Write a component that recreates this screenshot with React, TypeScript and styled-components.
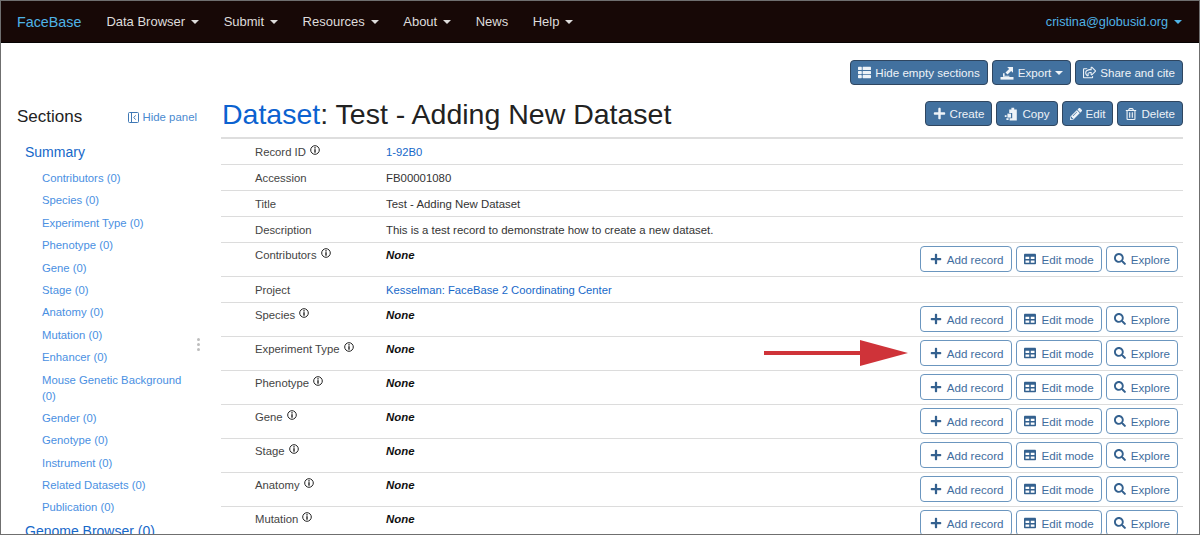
import React from 'react'
import styled, { createGlobalStyle } from 'styled-components'
import {
  FaThList,
  FaPlus,
  FaPencilAlt,
  FaRegTrashAlt,
  FaRegShareSquare,
  FaTable,
  FaSearch,
} from 'react-icons/fa'

const GlobalStyle = createGlobalStyle`
  html, body {
    margin: 0;
    padding: 0;
    background: #fff;
    overflow: hidden;
  }
  * {
    box-sizing: border-box;
  }
`

const navItems = [
  { label: 'Data Browser', caret: true },
  { label: 'Submit', caret: true },
  { label: 'Resources', caret: true },
  { label: 'About', caret: true },
  { label: 'News', caret: false },
  { label: 'Help', caret: true },
]

const sections = [
  'Contributors (0)',
  'Species (0)',
  'Experiment Type (0)',
  'Phenotype (0)',
  'Gene (0)',
  'Stage (0)',
  'Anatomy (0)',
  'Mutation (0)',
  'Enhancer (0)',
  'Mouse Genetic Background (0)',
  'Gender (0)',
  'Genotype (0)',
  'Instrument (0)',
  'Related Datasets (0)',
  'Publication (0)',
]

const InfoIcon = () => (
  <InfoSvg viewBox="0 0 10 10">
    <circle cx="5" cy="5" r="4.3" fill="none" stroke="#222" strokeWidth="1" />
    <rect x="4.3" y="4.2" width="1.4" height="3.5" fill="#222" />
    <rect x="4.3" y="2.2" width="1.4" height="1.3" fill="#222" />
  </InfoSvg>
)

const ExportIcon = () => (
  <svg width="14" height="14" viewBox="0 0 14 14" fill="currentColor">
    <rect x="0.5" y="11" width="13" height="2.6" />
    <path d="M7.2 1h5.8v5.8l-1.9-1.9-3.6 3.6-2-2 3.6-3.6z" />
    <path d="M3 7.2h1.6v2.5h4.8v1H3z" />
  </svg>
)

const CopyIcon = () => (
  <svg width="14" height="14" viewBox="0 0 14 14" fill="currentColor">
    <path d="M5.2 2.4h2.2V0.8h2.8v1.6h2.6v11H5.6v-2.2h2.6V6H5.2z" />
    <rect x="0.8" y="8.2" width="1.8" height="1.8" />
    <rect x="3.4" y="6.6" width="3.6" height="4" />
    <rect x="2.4" y="11.2" width="2.2" height="1.8" />
  </svg>
)

const PanelIcon = () => (
  <svg width="11" height="11" viewBox="0 0 11 11" fill="none" stroke="#3f78b5" strokeWidth="1">
    <rect x="0.5" y="0.5" width="10" height="10" rx="1" />
    <path d="M3.5 0.5v10" />
    <path d="M7.6 3.4 5.8 5.5l1.8 2.1" />
  </svg>
)

const ActionButtons = () => (
  <RowActions>
    <OutlineButton $wide>
      <FaPlus size={12} />
      Add record
    </OutlineButton>
    <OutlineButton>
      <FaTable size={12} />
      Edit mode
    </OutlineButton>
    <OutlineButton>
      <FaSearch size={12} />
      Explore
    </OutlineButton>
  </RowActions>
)

const App = () => {
  return (
    <Frame>
      <GlobalStyle />
      <Navbar>
        <Brand>FaceBase</Brand>
        <NavList>
          {navItems.map((item) => (
            <NavItem key={item.label}>
              {item.label}
              {item.caret && <Caret />}
            </NavItem>
          ))}
        </NavList>
        <UserMenu>
          cristina@globusid.org
          <Caret />
        </UserMenu>
      </Navbar>

      <Toolbar>
        <SolidButton>
          <FaThList size={13} />
          Hide empty sections
        </SolidButton>
        <SolidButton>
          <ExportIcon />
          Export
          <ButtonCaret />
        </SolidButton>
        <SolidButton>
          <FaRegShareSquare size={13} />
          Share and cite
        </SolidButton>
      </Toolbar>

      <Columns>
        <Sidebar>
          <SidebarHead>
            <SidebarTitle>Sections</SidebarTitle>
            <HidePanel>
              <PanelIcon />
              Hide panel
            </HidePanel>
          </SidebarHead>
          <SectionHead>Summary</SectionHead>
          <SectionList>
            {sections.map((name) => (
              <SectionItem key={name}>{name}</SectionItem>
            ))}
          </SectionList>
          <SectionHead>Genome Browser (0)</SectionHead>
          <ResizeDots>
            <i />
            <i />
            <i />
          </ResizeDots>
        </Sidebar>

        <Content>
          <TitleRow>
            <Title>
              <TitleLink>Dataset</TitleLink>: Test - Adding New Dataset
            </Title>
            <TitleActions>
              <SolidButton>
                <FaPlus size={13} />
                Create
              </SolidButton>
              <SolidButton>
                <CopyIcon />
                Copy
              </SolidButton>
              <SolidButton>
                <FaPencilAlt size={12} />
                Edit
              </SolidButton>
              <SolidButton>
                <FaRegTrashAlt size={12} />
                Delete
              </SolidButton>
            </TitleActions>
          </TitleRow>

          <RecordTable>
            <Row>
              <Label>Record ID <InfoIcon /></Label>
              <Value><ValueLink>1-92B0</ValueLink></Value>
            </Row>
            <Row>
              <Label>Accession</Label>
              <Value>FB00001080</Value>
            </Row>
            <Row>
              <Label>Title</Label>
              <Value>Test - Adding New Dataset</Value>
            </Row>
            <Row>
              <Label>Description</Label>
              <Value>This is a test record to demonstrate how to create a new dataset.</Value>
            </Row>
            <Row>
              <Label>Contributors <InfoIcon /></Label>
              <Value><Empty>None</Empty></Value>
              <ActionButtons />
            </Row>
            <Row>
              <Label>Project</Label>
              <Value><ValueLink>Kesselman: FaceBase 2 Coordinating Center</ValueLink></Value>
            </Row>
            {['Species', 'Experiment Type', 'Phenotype', 'Gene', 'Stage', 'Anatomy', 'Mutation'].map((name) => (
              <Row key={name}>
                <Label>{name} <InfoIcon /></Label>
                <Value><Empty>None</Empty></Value>
                <ActionButtons />
              </Row>
            ))}
          </RecordTable>
        </Content>
      </Columns>

      <Arrow viewBox="0 0 144 26" aria-hidden="true">
        <rect x="0" y="11" width="98" height="4" fill="#cf3339" />
        <polygon points="96,0 144,13 96,26" fill="#cf3339" />
      </Arrow>
    </Frame>
  )
}

export default App

const Frame = styled.div`
  position: relative;
  width: 1200px;
  height: 535px;
  overflow: hidden;
  border: 1px solid #6f6f6f;
  background: #fff;
  font-family: "Liberation Sans", Arial, sans-serif;
  font-size: 12px;
  color: #333;
`
const Navbar = styled.nav`
  display: flex;
  align-items: center;
  height: 42px;
  padding: 0 17px 0 16px;
  background: #170806;
  border-bottom: 1px solid #050202;
  font-size: 13px;
`
const Brand = styled.div`
  color: #4fb3e6;
  font-size: 14.3px;
  margin-right: 25px;
`
const NavList = styled.div`
  display: flex;
  align-items: center;
  gap: 24.5px;
  flex: 1;
`
const NavItem = styled.div`
  display: flex;
  align-items: center;
  color: #dedcdb;
`
const UserMenu = styled.div`
  display: flex;
  align-items: center;
  gap: 0;
  color: #4fb3e6;
  font-size: 12.7px;
`
const Caret = styled.span`
  display: inline-block;
  width: 0;
  height: 0;
  margin-left: 6px;
  border-left: 4px solid transparent;
  border-right: 4px solid transparent;
  border-top: 4px solid currentColor;
`
const ButtonCaret = styled(Caret)`
  margin-left: 0;
`
const Toolbar = styled.div`
  display: flex;
  justify-content: flex-end;
  gap: 4px;
  padding: 17px 16px 0 0;
`
const SolidButton = styled.button`
  display: inline-flex;
  align-items: center;
  gap: 4px;
  height: 25px;
  padding: 0 7px;
  border: 1px solid #2f4660;
  border-radius: 4px;
  background: #42719f;
  color: #eef3f8;
  font-family: inherit;
  font-size: 11.6px;
  white-space: nowrap;
`
const Columns = styled.div`
  display: flex;
  margin-top: 16px;
`
const Sidebar = styled.aside`
  position: relative;
  flex: none;
  width: 220px;
  padding: 7px 24px 0 16px;
`
const SidebarHead = styled.div`
  display: flex;
  align-items: center;
  justify-content: space-between;
  margin-bottom: 17px;
`
const SidebarTitle = styled.div`
  font-size: 17px;
  line-height: 18px;
  color: #222;
`
const HidePanel = styled.div`
  display: flex;
  align-items: center;
  gap: 4px;
  font-size: 11.4px;
  color: #4a8ad0;
`
const SectionHead = styled.div`
  padding-left: 8px;
  font-size: 14px;
  line-height: 18px;
  color: #1668c9;
  white-space: nowrap;
`
const SectionList = styled.div`
  display: flex;
  flex-direction: column;
  gap: 6.4px;
  padding: 9px 0 7px 25px;
`
const SectionItem = styled.div`
  font-size: 11.3px;
  line-height: 16px;
  color: #4a90e2;
`
const ResizeDots = styled.div`
  position: absolute;
  top: 237px;
  right: 21px;
  display: flex;
  flex-direction: column;
  gap: 2px;

  & i {
    display: block;
    width: 3px;
    height: 3px;
    border-radius: 50%;
    background: #bdbdbd;
  }
`
const Content = styled.main`
  flex: 1;
  min-width: 0;
  padding-right: 16px;
`
const TitleRow = styled.div`
  display: flex;
  align-items: flex-start;
  justify-content: space-between;
  height: 38px;
  border-bottom: 2px solid #dedede;
`
const Title = styled.h1`
  margin: -3px 0 0 1px;
  font-size: 28.5px;
  font-weight: 400;
  line-height: 32px;
  color: #222;
`
const TitleLink = styled.span`
  color: #0b62d0;
`
const TitleActions = styled.div`
  display: flex;
  gap: 4px;
`
const RecordTable = styled.div`
  display: flex;
  flex-direction: column;
`
const Row = styled.div`
  display: grid;
  grid-template-columns: 131px 1fr auto;
  padding: 6px 5px 0 34px;
  min-height: 26px;
  border-bottom: 1px solid #dcdcdc;
  line-height: 14px;

  &:has(button) {
    height: 34px;
    padding-top: 5px;
  }
`
const Label = styled.div`
  display: flex;
  align-items: flex-start;
  gap: 4px;
  font-size: 11.3px;
  color: #444;
`
const InfoSvg = styled.svg`
  flex: none;
  width: 10px;
  height: 10px;
`
const Value = styled.div`
  font-size: 11.4px;
  color: #333;
`
const ValueLink = styled.span`
  font-size: 11.25px;
  color: #1668c9;
`
const Empty = styled.span`
  font-weight: 700;
  font-style: italic;
  color: #111;
`
const RowActions = styled.div`
  display: flex;
  gap: 4px;
  margin-top: -2px;
`
const OutlineButton = styled.button<{ $wide?: boolean }>`
  display: inline-flex;
  align-items: center;
  gap: 5px;
  height: 26px;
  padding: ${(p) => (p.$wide ? '0 8px 0 9px' : '0 7px')};
  border: 1px solid #6b96bf;
  border-radius: 4px;
  background: #fff;
  color: #3f6d9e;
  font-family: inherit;
  font-size: 11.6px;
  white-space: nowrap;

  & svg {
    color: #34618f;
  }
`
const Arrow = styled.svg`
  position: absolute;
  left: 763px;
  top: 339px;
  width: 144px;
  height: 26px;
`
